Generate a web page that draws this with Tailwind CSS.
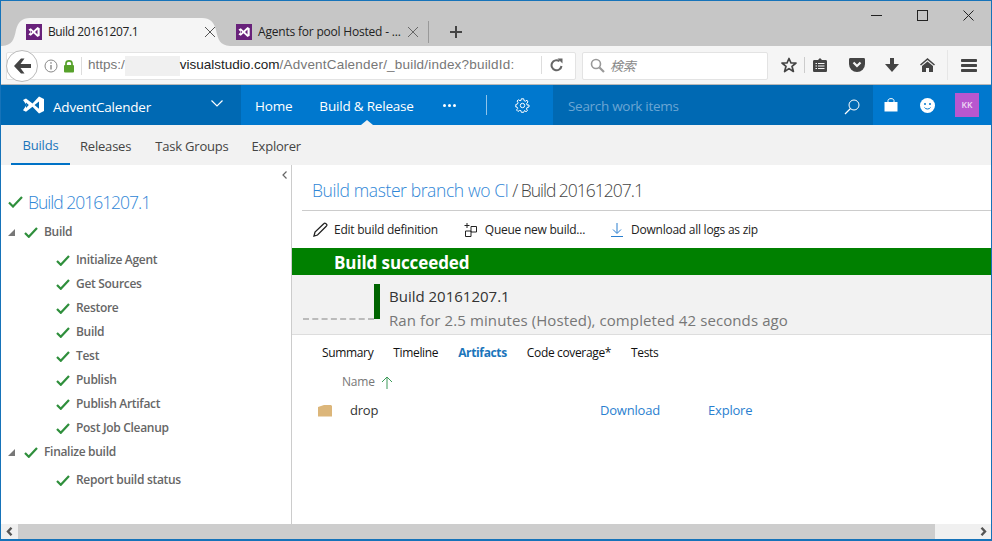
<!DOCTYPE html>
<html><head><meta charset="utf-8">
<script src="https://cdn.jsdelivr.net/npm/@tailwindcss/browser@4"></script>
</head>
<body class="m-0 bg-white">
<div class="w-[992px] h-[541px] overflow-hidden flex flex-col border-x border-t border-b-2 border-[#1673b9] font-['Open_Sans','Noto_Sans',sans-serif] tracking-[-0.2px] text-[#333]">
  <!-- tab strip -->
  <div class="h-[45px] shrink-0 bg-[#c6c6c6] relative">
    <div class="absolute left-0 right-0 top-0 h-[45px] flex items-end pl-[1px]">
      <div class="relative w-[228px] h-[28px] flex items-center">
        <svg class="absolute inset-0" width="228" height="28" viewBox="0 0 228 28"><path d="M0 28C10 27 12 22 14 12C16 4 20 0 28 0H200C208 0 212 4 214 12C216 22 218 27 228 28Z" fill="#f5f5f5"/></svg>
        <div class="relative flex items-center pl-[24px] w-full">
          <svg width="16" height="16" viewBox="0 0 16 16"><rect width="16" height="16" fill="#68217a"/><path d="M2.500 5.500L4.800 4.300L7.500 6.800L11.500 3L13.700 4.200V11.800L11.500 13L7.500 9.200L4.800 11.700L2.500 10.500L4.500 8ZM4.800 6.500V9.500L6.200 8ZM11.500 5.500L9 8L11.500 10.500Z" fill="#fff"/></svg>
          <span class="ml-[6px] text-[12px] leading-none text-[#222] w-[152px] tracking-[-0.4px]">Build 20161207.1</span>
          <svg class="ml-[4px]" width="12" height="12" viewBox="0 0 12 12"><path d="M1 1L11 11M11 1L1 11" stroke="#555" fill="none"/></svg>
        </div>
      </div>
      <div class="relative h-[28px] w-[221px] flex items-center pl-[6px]">
        <svg width="16" height="16" viewBox="0 0 16 16"><rect width="16" height="16" fill="#68217a"/><path d="M2.500 5.500L4.800 4.300L7.500 6.800L11.500 3L13.700 4.200V11.800L11.500 13L7.500 9.200L4.800 11.700L2.500 10.500L4.500 8ZM4.800 6.500V9.500L6.200 8ZM11.500 5.500L9 8L11.500 10.500Z" fill="#fff"/></svg>
        <span class="ml-[6px] text-[12px] leading-none text-[#222] w-[144px] whitespace-nowrap">Agents for pool Hosted - ...</span>
        <svg class="ml-[5px]" width="12" height="12" viewBox="0 0 12 12"><path d="M1 1L11 11M11 1L1 11" stroke="#666" fill="none"/></svg>
        <div class="ml-[9px] w-px h-[22px] bg-[#999]"></div>
      </div>
      <svg class="mb-[8px] ml-[-1px]" width="12" height="12" viewBox="0 0 12 12"><path d="M6 0V12M0 6H12" stroke="#444" stroke-width="2" fill="none"/></svg>
    </div>
    <div class="absolute right-[17px] top-[9px] flex items-center gap-[35px]">
      <svg width="11" height="11" viewBox="0 0 11 11"><path d="M0 5.500H11" stroke="#222" fill="none"/></svg>
      <svg width="11" height="11" viewBox="0 0 11 11"><rect x=".5" y=".5" width="10" height="10" stroke="#222" fill="none"/></svg>
      <svg width="11" height="11" viewBox="0 0 11 11"><path d="M.5 .5L10.500 10.500M10.500 .5L.5 10.500" stroke="#222" fill="none"/></svg>
    </div>
  </div>
  <!-- nav bar -->
  <div class="h-[39px] shrink-0 bg-[#f5f5f5] border-b border-[#b8b8b8] flex items-center relative">
    <div class="ml-[5px] w-[570px] h-[28px] bg-white border border-[#e3e3e3] rounded-[2px] flex items-center relative mt-[1px]">
      <div class="absolute left-[-1px] top-[-3px] w-[32px] h-[32px] rounded-full bg-white border border-[#bbb] flex items-center justify-center">
        <svg width="19" height="16" viewBox="0 0 19 16"><path d="M8 0.500L1 8L8 15.500H11.500L7.500 10H18V6H7.500L11.500 0.500Z" fill="#444"/></svg>
      </div>
      <svg class="ml-[37px]" width="14" height="14" viewBox="0 0 14 14"><circle cx="7" cy="7" r="6" stroke="#888" fill="none"/><rect x="6.300" y="6" width="1.400" height="4.500" fill="#888"/><rect x="6.300" y="3.200" width="1.400" height="1.500" fill="#888"/></svg>
      <svg class="ml-[5px]" width="12" height="14" viewBox="0 0 12 14"><path d="M3 6.500V4.500C3 1 9 1 9 4.500V6.500" stroke="#57a12b" stroke-width="1.700" fill="none"/><rect x="1" y="6" width="10" height="7.500" rx="1" fill="#57a12b"/></svg>
      <div class="ml-[6px] w-px h-[18px] bg-[#ddd]"></div>
      <div class="ml-[6px] flex items-center text-[13.5px] tracking-[0px] text-[#777] whitespace-nowrap font-['Liberation_Sans',sans-serif] w-[427px] overflow-hidden">
        <span>https:/</span><span class="inline-block w-[55px] h-[20px] bg-[#f0f0f0]"></span><span class="text-[#222]">visualstudio.com</span><span class="tracking-[0.2px]">/AdventCalender/_build/index?buildId:</span>
      </div>
      <div class="absolute right-[33px] top-[3px] w-px h-[18px] bg-[#ddd]"></div>
      <svg class="absolute right-[11px] top-[5px]" width="14" height="14" viewBox="0 0 14 14"><path d="M11.500 8A5 5 0 1 1 9.500 3.200" stroke="#666" stroke-width="2" fill="none"/><path d="M7.500 .5H12.500V5.500Z" fill="#666"/></svg>
    </div>
    <div class="ml-[6px] w-[186px] h-[28px] bg-white border border-[#e3e3e3] rounded-[2px] flex items-center mt-[1px]">
      <svg class="ml-[7px]" width="15" height="15" viewBox="0 0 15 15"><circle cx="6" cy="6" r="4.500" stroke="#999" stroke-width="1.600" fill="none"/><path d="M9.500 9.500L14 14" stroke="#999" stroke-width="2.200"/></svg>
      <span class="ml-[5px] text-[13px] italic text-[#888] font-['Noto_Sans_CJK_JP',sans-serif]">検索</span>
    </div>
    <div class="ml-[13px] flex items-center">
      <svg width="16" height="16" viewBox="0 0 16 16"><path d="M8 1.500L10 6H15L11 9.300L12.400 14.500L8 11.600L3.600 14.500L5 9.300L1 6H6Z" stroke="#444" stroke-width="1.700" stroke-linejoin="round" fill="none"/></svg>
      <div class="ml-[7px] w-px h-[16px] bg-[#ccc]"></div>
      <svg class="ml-[8px]" width="14" height="16" viewBox="0 0 14 16"><path d="M1.500 3H5L7 1L9 3H12.500C13.500 3 14 3.500 14 4.500V13.500C14 14.500 13.500 15 12.500 15H1.500C.5 15 0 14.500 0 13.500V4.500C0 3.500 .5 3 1.500 3Z" fill="#444"/><path d="M2.500 6.500H4M5 6.500H11.500M2.500 9H4M5 9H11.500M2.500 11.500H4M5 11.500H11.500" stroke="#f5f5f5" stroke-width="1.200"/></svg>
      <svg class="ml-[22px]" width="16" height="14" viewBox="0 0 16 14"><path d="M1.500 0H14.500C15.500 0 16 .5 16 1.500V6A8 8 0 0 1 0 6V1.500C0 .5 .5 0 1.500 0Z" fill="#444"/><path d="M4.500 4.500L8 8L11.500 4.500" stroke="#f5f5f5" stroke-width="2.200" fill="none"/></svg>
      <svg class="ml-[20px]" width="14" height="14" viewBox="0 0 14 14"><path d="M5 0H9V6H14L7 14L0 6H5Z" fill="#444"/></svg>
      <svg class="ml-[21px]" width="15" height="14" viewBox="0 0 15 14"><path d="M7.500 0L15 6.500L14 7.500L7.500 2L1 7.500L0 6.500Z" fill="#444"/><path d="M7.500 3.500L13 8V14H9V10H6V14H2V8Z" fill="#444"/></svg>
      <div class="ml-[12px] w-px h-[30px] bg-[#e6e6e6]"></div>
      <svg class="ml-[13px]" width="16" height="13" viewBox="0 0 16 13"><rect width="16" height="3" rx=".8" fill="#444"/><rect y="5" width="16" height="3" rx=".8" fill="#444"/><rect y="10" width="16" height="3" rx=".8" fill="#444"/></svg>
    </div>
  </div>
  <!-- blue header -->
  <div class="h-[40px] shrink-0 bg-[#0078ce] flex items-stretch text-white relative">
    <div class="w-[240px] bg-[#0069b3] flex items-center">
      <svg class="ml-[22px]" width="22" height="20" viewBox="0 0 22 20"><path d="M0 5L3 3.500L9.500 8.500L16 1.500L21 4V16L16 18.500L9.500 11.800L3 16.800L0 15.300L3.500 10ZM3 7.500V13L5.800 10ZM16 6.500L11.500 10L16 13.800Z" fill="#fff"/></svg>
      <span class="ml-[8px] text-[13.5px] mt-[5px]">AdventCalender</span>
      <svg class="ml-[60px] mb-[4px]" width="12" height="7" viewBox="0 0 12 7"><path d="M.5 .5L6 6L11.500 .5" stroke="#fff" stroke-width="1.200" fill="none"/></svg>
    </div>
    <div class="flex items-center text-[13.5px]">
      <span class="ml-[14px] mt-[3px]">Home</span>
      <span class="ml-[27px] mt-[3px] relative">Build &amp; Release</span>
      <span class="ml-[29px] flex gap-[2px]"><i class="block w-[3px] h-[3px] bg-white rounded-full"></i><i class="block w-[3px] h-[3px] bg-white rounded-full"></i><i class="block w-[3px] h-[3px] bg-white rounded-full"></i></span>
      <div class="ml-[30px] w-px h-[20px] bg-[#8fc4ea]"></div>
      <svg class="ml-[28px]" width="15" height="15" viewBox="0 0 15 15"><circle cx="7.500" cy="7.500" r="2.200" stroke="#fff" fill="none"/><path d="M6.300 .8H8.700L9 2.600L10.500 3.200L12 2.200L13 4L11.700 5.200L12 7H14V9L12 9.500L11.500 11L12.500 12.500L11 13.700L9.500 12.500L8.700 14.300H6.300L5.800 12.500L4.300 12.500L3 13.500L1.500 12L2.700 10.500L2 9H.8V6.500L2.500 6L3 4.500L2 3L3.500 1.800L5 2.700L6 2.500Z" stroke="#fff" fill="none"/></svg>
    </div>
    <div class="absolute left-[552px] top-0 w-[320px] h-[40px] bg-[#0069b3] flex items-center pl-[15px] pr-[13px] justify-between">
      <span class="text-[13.5px] text-[#6ba6d4] tracking-[-0.3px] mt-[3px]">Search work items</span>
      <svg width="16" height="16" viewBox="0 0 16 16" class="mt-[3px]"><circle cx="10" cy="6" r="5" stroke="#fff" fill="none"/><path d="M6.500 9.500L1 15" stroke="#fff" stroke-width="1.300"/></svg>
    </div>
    <div class="absolute right-[12px] top-[8px] flex items-center">
      <svg width="14" height="16" viewBox="0 0 14 16"><path d="M4 5V3.500C4 1 10 1 10 3.500V5" stroke="#fff" fill="none"/><path d="M.5 5H13.500V14.500H.5Z" fill="#fff"/></svg>
      <svg class="ml-[22px]" width="15" height="15" viewBox="0 0 15 15"><circle cx="7.500" cy="7.500" r="7.500" fill="#fff"/><circle cx="5" cy="6" r="1" fill="#0078ce"/><circle cx="10" cy="6" r="1" fill="#0078ce"/><path d="M4.500 9.500C5.500 11.500 9.500 11.500 10.500 9.500" stroke="#0078ce" fill="none"/></svg>
      <div class="ml-[20px] w-[24px] h-[24px] bg-[#b857cf] flex items-center justify-center text-[8.5px] tracking-normal font-semibold text-[#f0dcf5]">KK</div>
    </div>
  </div>
  <!-- sub nav -->
  <div class="h-[40px] shrink-0 bg-[#f2f2f2] flex items-stretch text-[13px] text-[#444] relative">
    <svg class="absolute left-[360px] top-[-5px]" width="12" height="5" viewBox="0 0 12 5"><path d="M6 0L12 5H0Z" fill="#f2f2f2"/></svg>
    <div class="ml-[10px] w-[59px] flex items-center justify-center text-[#1b75bb] border-b-[2px] border-[#0072c6] pt-[4px]">Builds</div>
    <div class="ml-[10px] flex items-center pt-[4px]">Releases</div>
    <div class="ml-[24px] flex items-center pt-[4px]">Task Groups</div>
    <div class="ml-[23px] flex items-center pt-[4px]">Explorer</div>
  </div>
  <!-- content -->
  <div class="flex-1 min-h-0 flex">
    <div class="w-[291px] shrink-0 border-r border-[#ccc] relative">
      <svg class="absolute right-[4px] top-[6px]" width="5" height="8" viewBox="0 0 5 8"><path d="M4.500 .5L1 4L4.500 7.500" stroke="#666" stroke-width="1.200" fill="none"/></svg>
      <div class="flex items-center h-[24px] mt-[25px] pl-[7px]">
        <svg width="15" height="12" viewBox="0 0 15 12"><path d="M1 6.500L5 10.500L14 1" stroke="#2f8f3c" stroke-width="2.200" fill="none"/></svg>
        <span class="ml-[5px] text-[17.5px] font-light text-[#2f86d6] tracking-[-1px]">Build 20161207.1</span>
      </div>
      <div class="flex flex-col text-[12px] font-semibold text-[#666] mt-[6px] tracking-[-0.3px]">
        <div class="h-[24px] flex items-center pl-[7px]">
          <svg width="7" height="7" viewBox="0 0 7 7"><path d="M7 0V7H0Z" fill="#777"/></svg>
          <svg class="ml-[9px]" width="14" height="11" viewBox="0 0 14 11"><path d="M1 6L4.800 9.800L13 1" stroke="#2f8f3c" stroke-width="2.200" fill="none"/></svg>
          <span class="ml-[6px]">Build</span>
        </div>
        <div class="flex flex-col mt-[4px]">
          <div class="h-[24px] flex items-center pl-[55px]"><svg width="14" height="11" viewBox="0 0 14 11"><path d="M1 6L4.800 9.800L13 1" stroke="#2f8f3c" stroke-width="2.200" fill="none"/></svg><span class="ml-[6px]">Initialize Agent</span></div>
          <div class="h-[24px] flex items-center pl-[55px]"><svg width="14" height="11" viewBox="0 0 14 11"><path d="M1 6L4.800 9.800L13 1" stroke="#2f8f3c" stroke-width="2.200" fill="none"/></svg><span class="ml-[6px]">Get Sources</span></div>
          <div class="h-[24px] flex items-center pl-[55px]"><svg width="14" height="11" viewBox="0 0 14 11"><path d="M1 6L4.800 9.800L13 1" stroke="#2f8f3c" stroke-width="2.200" fill="none"/></svg><span class="ml-[6px]">Restore</span></div>
          <div class="h-[24px] flex items-center pl-[55px]"><svg width="14" height="11" viewBox="0 0 14 11"><path d="M1 6L4.800 9.800L13 1" stroke="#2f8f3c" stroke-width="2.200" fill="none"/></svg><span class="ml-[6px]">Build</span></div>
          <div class="h-[24px] flex items-center pl-[55px]"><svg width="14" height="11" viewBox="0 0 14 11"><path d="M1 6L4.800 9.800L13 1" stroke="#2f8f3c" stroke-width="2.200" fill="none"/></svg><span class="ml-[6px]">Test</span></div>
          <div class="h-[24px] flex items-center pl-[55px]"><svg width="14" height="11" viewBox="0 0 14 11"><path d="M1 6L4.800 9.800L13 1" stroke="#2f8f3c" stroke-width="2.200" fill="none"/></svg><span class="ml-[6px]">Publish</span></div>
          <div class="h-[24px] flex items-center pl-[55px]"><svg width="14" height="11" viewBox="0 0 14 11"><path d="M1 6L4.800 9.800L13 1" stroke="#2f8f3c" stroke-width="2.200" fill="none"/></svg><span class="ml-[6px]">Publish Artifact</span></div>
          <div class="h-[24px] flex items-center pl-[55px]"><svg width="14" height="11" viewBox="0 0 14 11"><path d="M1 6L4.800 9.800L13 1" stroke="#2f8f3c" stroke-width="2.200" fill="none"/></svg><span class="ml-[6px]">Post Job Cleanup</span></div>
        </div>
        <div class="h-[24px] flex items-center pl-[7px]">
          <svg width="7" height="7" viewBox="0 0 7 7"><path d="M7 0V7H0Z" fill="#777"/></svg>
          <svg class="ml-[9px]" width="14" height="11" viewBox="0 0 14 11"><path d="M1 6L4.800 9.800L13 1" stroke="#2f8f3c" stroke-width="2.200" fill="none"/></svg>
          <span class="ml-[6px]">Finalize build</span>
        </div>
        <div class="h-[24px] mt-[4px] flex items-center pl-[55px]"><svg width="14" height="11" viewBox="0 0 14 11"><path d="M1 6L4.800 9.800L13 1" stroke="#2f8f3c" stroke-width="2.200" fill="none"/></svg><span class="ml-[6px]">Report build status</span></div>
      </div>
    </div>
    <div class="flex-1 min-w-0 flex flex-col">
      <div class="ml-[10px] h-[46px] border-b border-[#ccc] flex items-center pl-[10px] pt-[5px] text-[17.5px] font-light">
        <span class="text-[#2f86d6] tracking-[-0.4px]">Build master branch wo CI</span><span class="text-[#444] tracking-[-1px]">&nbsp;/ Build 20161207.1</span>
      </div>
      <div class="h-[37px] flex items-center text-[12px] text-[#222] tracking-[-0.25px]">
        <svg class="ml-[21px]" width="15" height="15" viewBox="0 0 15 15"><path d="M1 14L2 10L11 1.500C12 .5 13.500 2 14 3C14 3.500 13.500 4 13 4.500L4.500 13Z" stroke="#222" stroke-width="1.300" fill="none"/></svg>
        <span class="ml-[6px]">Edit build definition</span>
        <svg class="ml-[26px]" width="13" height="14" viewBox="0 0 13 14"><path d="M3 0V5M.5 2.500H5.500M7 3.500H12.500V9H7ZM1.500 8H7V13.500H1.500Z" stroke="#222" fill="none"/></svg>
        <span class="ml-[8px]">Queue new build...</span>
        <svg class="ml-[26px]" width="12" height="14" viewBox="0 0 12 14"><path d="M6 0V10M2 6.500L6 10.500L10 6.500M0 13.500H12" stroke="#2a7fcf" fill="none"/></svg>
        <span class="ml-[8px]">Download all logs as zip</span>
      </div>
      <div class="h-[27px] bg-[#008000] flex items-center pl-[42px] pt-[2px] text-[17px] font-bold text-white tracking-[-0.1px]">Build succeeded</div>
      <div class="h-[60px] bg-[#f2f2f2] border-b border-[#ddd] flex relative">
        <div class="absolute left-[11px] top-[43px] w-[71px] border-t-[2px] border-dashed border-[#bbb]"></div>
        <div class="ml-[82px] mt-[9px] w-[6px] h-[35px] bg-[#006400]"></div>
        <div class="ml-[9px] flex flex-col">
          <span class="text-[15px] text-[#333] mt-[10px] leading-[23px] tracking-[0px]">Build 20161207.1</span>
          <span class="text-[15px] text-[#777] leading-[24px] tracking-[0.1px] whitespace-nowrap">Ran for 2.5 minutes (Hosted), completed 42 seconds ago</span>
        </div>
      </div>
      <div class="h-[34px] flex items-center text-[12px] text-[#111] pl-[30px] gap-[20px] mt-[1px] tracking-[-0.35px]">
        <span>Summary</span><span>Timeline</span><span class="font-bold text-[#1b75bb]">Artifacts</span><span>Code coverage*</span><span>Tests</span>
      </div>
      <div class="h-[24px] flex items-center text-[12px] text-[#777] pl-[50px]">
        <span>Name</span>
        <svg class="ml-[6px]" width="12" height="13" viewBox="0 0 12 13"><path d="M6 13V1M1 6L6 1L11 6" stroke="#3d9a5a" fill="none"/></svg>
      </div>
      <div class="h-[34px] flex items-center text-[13px] relative">
        <svg class="ml-[26px]" width="14" height="12" viewBox="0 0 14 12"><path d="M0 2L6 0H13L14 1V11.500H0Z" fill="#dcb67a"/></svg>
        <span class="ml-[18px] text-[#333]">drop</span>
        <span class="absolute left-[308px] text-[#2a7fd0]">Download</span>
        <span class="absolute left-[416px] text-[#2a7fd0]">Explore</span>
      </div>
    </div>
  </div>
  <!-- scrollbar -->
  <div class="h-[15px] shrink-0 bg-[#f0f0f0] flex items-center">
    <div class="w-[17px] flex justify-center"><svg width="7" height="9" viewBox="0 0 7 9"><path d="M5.500 .8L2 4.500L5.500 8.200" stroke="#555" stroke-width="2.400" fill="none"/></svg></div>
    <div class="w-[917px] h-[15px] bg-[#cdcdcd]"></div>
    <div class="flex-1 flex justify-end pr-[4px]"><svg width="7" height="9" viewBox="0 0 7 9"><path d="M1.500 .8L5 4.500L1.500 8.200" stroke="#555" stroke-width="2.400" fill="none"/></svg></div>
  </div>
</div>
</body></html>
